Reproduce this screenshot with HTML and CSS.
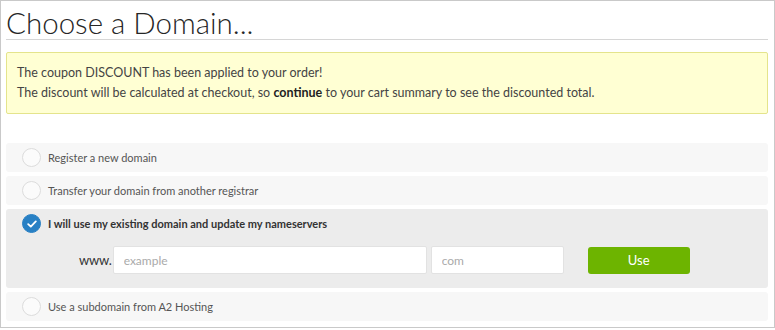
FILE: index.html
```html
<!DOCTYPE html>
<html lang="en">
<head>
    <meta charset="UTF-8">
    <title>Choose a Domain</title>
    <link rel="stylesheet" href="styles.css">
</head>
<body>
    <div class="frame">
        <h1 class="page-title">Choose a Domain...</h1>

        <div class="alert">
            <p>The coupon DISCOUNT has been applied to your order!</p>
            <p>The discount will be calculated at checkout, so <strong>continue</strong> to your cart summary to see the discounted total.</p>
        </div>

        <div class="domain-options">
            <div class="option">
                <span class="radio"></span>
                <span class="option-label">Register a new domain</span>
            </div>
            <div class="option">
                <span class="radio"></span>
                <span class="option-label">Transfer your domain from another registrar</span>
            </div>
            <div class="option option-selected">
                <div class="option-head">
                    <span class="radio radio-checked">
                        <svg width="10" height="8" viewBox="0 0 10 8"><path d="M1.2 4.2 L3.8 6.6 L8.8 1.4" fill="none" stroke="#fff" stroke-width="1.8" stroke-linecap="round" stroke-linejoin="round"/></svg>
                    </span>
                    <span class="option-label">I will use my existing domain and update my nameservers</span>
                </div>
                <div class="domain-form">
                    <span class="www">www.</span>
                    <input class="field field-sld" type="text" placeholder="example">
                    <input class="field field-tld" type="text" placeholder="com">
                    <button class="btn-use">Use</button>
                </div>
            </div>
            <div class="option">
                <span class="radio"></span>
                <span class="option-label">Use a subdomain from A2 Hosting</span>
            </div>
        </div>
    </div>
</body>
</html>
```

FILE: styles.css
```css
body {
    margin: 0;
    background: #fff;
    font-family: Lato, "Open Sans", sans-serif;
    color: #444;
}

.frame {
    width: 762px;
    height: 326px;
    border: 1px solid #c9c9c9;
    padding: 0 6px 0 5px;
}

.page-title {
    margin: 0;
    padding: 6px 0 0 0;
    height: 32px;
    font-family: Lato, sans-serif;
    font-weight: 300;
    font-size: 29.5px;
    line-height: 32px;
    color: #262626;
    border-bottom: 1px solid #d6d6d6;
}

.alert {
    margin-top: 12px;
    height: 60px;
    padding: 0 10px;
    background: #ffffd3;
    border: 1px solid #e4e48c;
    border-radius: 2px;
    display: flex;
    flex-direction: column;
    justify-content: center;
    gap: 4px;
    font-size: 12.5px;
    color: #444;
}

.alert p {
    margin: 0;
    line-height: 16px;
}

.alert strong {
    color: #222;
}

.domain-options {
    margin-top: 29px;
    display: flex;
    flex-direction: column;
    gap: 4px;
}

.option {
    background: #f7f7f7;
    border-radius: 3px;
    min-height: 29px;
    display: flex;
    align-items: center;
    padding-left: 16px;
    font-size: 11px;
    color: #555;
}

.option-selected {
    background: #ececec;
    display: block;
    padding: 0 0 0 16px;
    height: 79px;
}

.option-head {
    display: flex;
    align-items: center;
    height: 29px;
}

.option-selected .option-label {
    font-weight: bold;
    color: #333;
}

.radio {
    width: 17px;
    height: 17px;
    border: 1px solid #dcdcdc;
    border-radius: 50%;
    background: #fbfbfb;
    margin-right: 7px;
    display: inline-flex;
    align-items: center;
    justify-content: center;
    flex-shrink: 0;
}

.radio-checked {
    background: #2880c4;
    border-color: #2880c4;
}

.domain-form {
    display: flex;
    align-items: center;
    margin-top: 8px;
    padding-left: 57px;
}

.www {
    font-size: 13px;
    color: #333;
    margin-right: 1px;
    letter-spacing: -0.2px;
}

.field {
    height: 28px;
    box-sizing: border-box;
    border: 1px solid #e2e2e2;
    border-radius: 2px;
    background: #fff;
    padding: 0 10px;
    font-family: Lato, sans-serif;
    font-size: 12px;
    color: #555;
    outline: none;
}

.field::placeholder {
    color: #aaa;
}

.field-sld {
    width: 314px;
    margin-right: 4px;
}

.field-tld {
    width: 133px;
    margin-right: 24px;
}

.btn-use {
    width: 102px;
    height: 27px;
    border: 0;
    border-radius: 3px;
    background: #6db400;
    color: #fff;
    font-family: Lato, sans-serif;
    font-size: 13px;
}
```
